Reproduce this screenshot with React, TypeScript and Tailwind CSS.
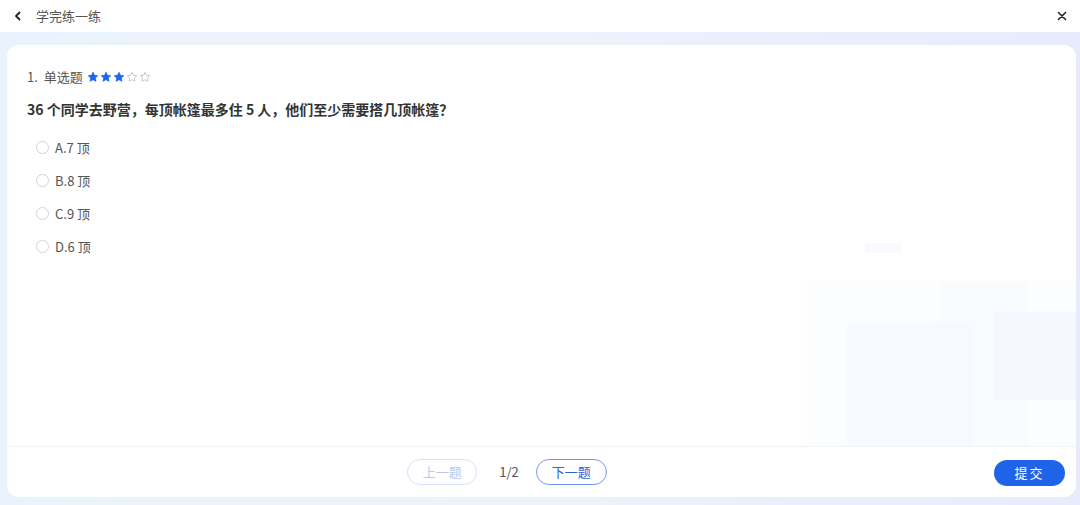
import React from "react";

const Star = ({ filled }: { filled: boolean }) => (
  <svg width="12" height="12" viewBox="0 0 24 24">
    <path
      d="M12 2.5l2.9 6.1 6.6.8-4.9 4.6 1.3 6.6L12 17.3l-5.9 3.3 1.3-6.6-4.9-4.6 6.6-.8z"
      fill={filled ? "#1a66f0" : "none"}
      stroke={filled ? "#1a66f0" : "#b9bec7"}
      strokeWidth={filled ? 1.5 : 1.6}
      strokeLinejoin="round"
    />
  </svg>
);

const options = ["A.7 顶", "B.8 顶", "C.9 顶", "D.6 顶"];

export default function App() {
  return (
    <div
      className="w-[1080px] h-[505px] flex flex-col overflow-hidden text-[#333]"
      style={{ fontFamily: '"Noto Sans CJK SC", "Noto Sans", "Liberation Sans", sans-serif' }}
    >
      <div className="h-[32px] bg-white flex items-center justify-between px-[12px] shrink-0">
        <div className="flex items-center">
          <svg width="12" height="12" viewBox="0 0 12 12">
            <path d="M7.5 2.5L4 6l3.5 3.5" fill="none" stroke="#222" strokeWidth="1.8" strokeLinecap="round" strokeLinejoin="round" />
          </svg>
          <span className="ml-[12px] text-[13px] text-[#555]">学完练一练</span>
        </div>
        <svg width="10" height="10" viewBox="0 0 10 10" className="mr-[1px]">
          <path d="M1.5 1.5l7 7M8.5 1.5l-7 7" stroke="#222" strokeWidth="1.6" strokeLinecap="round" />
        </svg>
      </div>
      <div className="flex-1 bg-gradient-to-r from-[#eaf3fd] via-[#eef2fc] to-[#e7ebfc] pl-[7px] pr-[4px] pt-[13px] pb-[8px] flex">
        <div className="flex-1 bg-white rounded-[12px] flex flex-col relative overflow-hidden">
          <div className="absolute right-[0px] bottom-[51px] w-[272px] h-[210px] pointer-events-none">
            <div className="absolute left-[3px] top-[45px] w-[270px] h-[165px] bg-[#fcfdff]" />
            <div className="absolute left-[61px] top-[7px] w-[37px] h-[10px] bg-[#f8fafe]" />
            <div className="absolute left-[138px] top-[45px] w-[86px] h-[165px] bg-[#f9fbfe]" />
            <div className="absolute left-[43px] top-[87px] w-[126px] h-[123px] bg-[#f6f9fe]" />
            <div className="absolute left-[190px] top-[76px] w-[82px] h-[88px] bg-[#f5f8fe]" />
          </div>
          <div className="flex-1 pl-[20px] pt-[25px] relative">
            <div className="flex items-center h-[14px]">
              <span className="text-[13px] text-[#555]">1.&nbsp;&nbsp;单选题</span>
              <div className="flex items-center ml-[4px] gap-[1px]">
                <Star filled />
                <Star filled />
                <Star filled />
                <Star filled={false} />
                <Star filled={false} />
              </div>
            </div>
            <div className="mt-[15px] text-[14px] font-bold text-[#333] leading-[20px]">
              36 个同学去野营，每顶帐篷最多住 5 人，他们至少需要搭几顶帐篷？
            </div>
            <div className="mt-[12px] flex flex-col">
              {options.map((o) => (
                <div key={o} className="flex items-center h-[33px] pl-[9px]">
                  <span className="w-[13px] h-[13px] rounded-full border border-[#cfd3d9] bg-white" />
                  <span className="ml-[6px] text-[13px] text-[#555]">{o}</span>
                </div>
              ))}
            </div>
          </div>
          <div className="h-[51px] border-t border-[#f0f2f5] flex items-center relative shrink-0">
            <div className="flex-1 flex items-center justify-center pr-[69px]">
              <button className="w-[70px] h-[26px] rounded-full border border-[#d4e0fb] text-[13px] text-[#b9c8ef] bg-white">
                上一题
              </button>
              <span className="ml-[22px] text-[13px] text-[#555]">1/2</span>
              <button className="ml-[17px] w-[71px] h-[26px] rounded-full border border-[#6f98f0] text-[13px] text-[#2d63d8] bg-white">
                下一题
              </button>
            </div>
            <button className="absolute right-[11px] top-[13px] w-[71px] h-[26px] rounded-full bg-[#1f63e8] text-white text-[13px] tracking-[2px]">
              提交
            </button>
          </div>
        </div>
      </div>
    </div>
  );
}
